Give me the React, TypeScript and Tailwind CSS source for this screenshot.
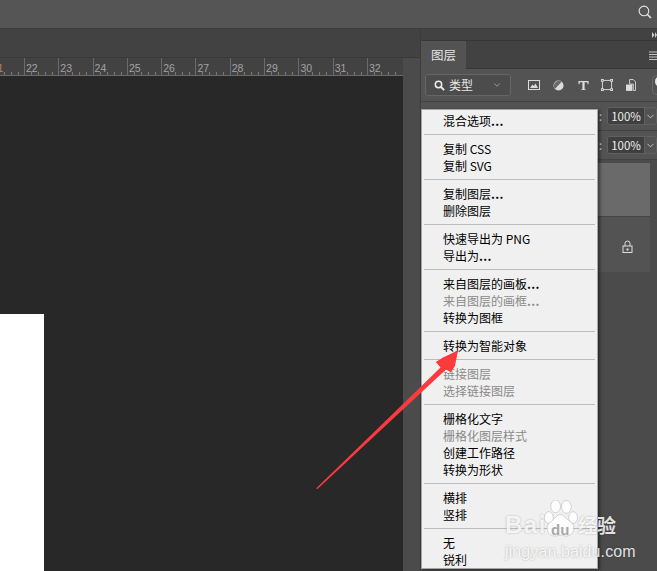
import React from "react";
import { ChevronDown } from "lucide-react";

const ticks = [21, 22, 23, 24, 25, 26, 27, 28, 29, 30, 31, 32];

// null marks a separator, dim items are the disabled ones
const menuItems: ({ label: string; dots?: boolean; dim?: boolean } | null)[] = [
  { label: "混合选项", dots: true },
  null,
  { label: "复制 CSS" },
  { label: "复制 SVG" },
  null,
  { label: "复制图层", dots: true },
  { label: "删除图层" },
  null,
  { label: "快速导出为 PNG" },
  { label: "导出为", dots: true },
  null,
  { label: "来自图层的画板", dots: true },
  { label: "来自图层的画框", dots: true, dim: true },
  { label: "转换为图框" },
  null,
  { label: "转换为智能对象" },
  null,
  { label: "链接图层", dim: true },
  { label: "选择链接图层", dim: true },
  null,
  { label: "栅格化文字" },
  { label: "栅格化图层样式", dim: true },
  { label: "创建工作路径" },
  { label: "转换为形状" },
  null,
  { label: "横排" },
  { label: "竖排" },
  null,
  { label: "无" },
  { label: "锐利" },
];

const Ruler = () => (
  <div className="h-[18px] w-[403px] overflow-hidden bg-[#424242] border-b border-[#6b6b6b] flex">
    <div className="flex h-full -ml-[10.3px] shrink-0">
      {ticks.map((n) => (
        <div key={n} className="relative h-full w-[34.3px] shrink-0 border-l border-[#6a6a6a]">
          <span className={`block pl-[1px] pt-[4px] text-[10.5px] leading-[12px] ${n === 21 ? "text-[#b9815a]" : "text-[#a3a3a3]"}`}>
            {n}
          </span>
          <svg className="absolute left-0 bottom-0" width="34" height="4">
            {[6.5, 13.5, 20.5, 27.5].map((x) => (
              <line key={x} x1={x} x2={x} y1="1" y2="4" stroke="#777" />
            ))}
          </svg>
        </div>
      ))}
    </div>
  </div>
);

const PercentBox = () => (
  <div className="flex items-center">
    <span className="mr-[5px] text-[12px] leading-none text-[#d8d8d8]">:</span>
    <div className="flex h-[18px] w-[50px] rounded-[3px] border border-[#606060] overflow-hidden">
      <div className="w-[38px] bg-[#3f3f3f] border-r border-[#606060] text-[11.5px] leading-[16px] text-center text-[#eeeeee]">
        100%
      </div>
      <div className="flex-1 flex items-center justify-center">
        <ChevronDown size={11} className="text-[#c8c8c8]" />
      </div>
    </div>
  </div>
);

const FilterIcons = () => (
  <div className="flex items-center">
    <svg className="ml-[17px]" width="12" height="10" viewBox="0 0 12 10">
      <rect x="0.500" y="0.500" width="11" height="9" fill="none" stroke="#dcdcdc" />
      <path d="M2 8 4.500 4.500 6 6l1.500-2.500L10 8z" fill="#dcdcdc" />
    </svg>
    <svg className="ml-[13px]" width="11" height="11" viewBox="0 0 12 12">
      <circle cx="6" cy="6" r="5.500" fill="#dcdcdc" />
      <path d="M9.500 2 2 9.800a5.500 5.500 0 0 1 7.500-7.800z" fill="#6a6a6a" />
    </svg>
    <svg className="ml-[14px]" width="11" height="11" viewBox="0 0 12 12">
      <path d="M0.500 1h11v3.500h-1L10 2.500H7.200v7.800h1.500V11H3.300v-.7h1.500V2.500H2L1.500 4.500h-1z" fill="#dcdcdc" />
    </svg>
    <svg className="ml-[12px]" width="12" height="12" viewBox="0 0 13 13">
      <rect x="1.500" y="1.500" width="10" height="10" fill="none" stroke="#dcdcdc" />
      <g fill="#535353" stroke="#dcdcdc">
        <rect x="0.500" y="0.500" width="2" height="2" />
        <rect x="10.500" y="0.500" width="2" height="2" />
        <rect x="0.500" y="10.500" width="2" height="2" />
        <rect x="10.500" y="10.500" width="2" height="2" />
      </g>
    </svg>
    <svg className="ml-[13px]" width="10" height="12" viewBox="0 0 11 13">
      <path d="M4 .5h4l2.500 2.500v9.500H8V5.500H4z" fill="none" stroke="#dcdcdc" />
      <rect x="0" y="6" width="7" height="7" fill="#dcdcdc" />
    </svg>
    <div className="ml-[16px] h-[20px] w-[5px] rounded-l-[6px] border-l border-y border-[#6a6a6a] overflow-hidden">
      <div className="h-[11px] w-[14px] ml-[2px] rounded-full bg-[#e6e6e6]" />
    </div>
  </div>
);

const LayersPanel = () => (
  <div className="flex-1 min-w-0 flex flex-col bg-[#4b4b4b] font-['Noto_Sans_CJK_SC',sans-serif]">
    <div className="h-[12px] bg-[#424242] border-b border-[#363636] flex items-center justify-end">
      <svg width="5" height="6" viewBox="0 0 5 6">
        <path d="M0 0l2.500 3L0 6zM3 0l2 3-2 3z" fill="#cfcfcf" />
      </svg>
    </div>
    <div className="h-[28px] bg-[#424242] border-b border-[#363636] flex items-stretch justify-between">
      <div className="w-[45px] -mb-px bg-[#535353] text-[12.5px] leading-[27px] text-center text-[#e6e6e6]">图层</div>
      <svg className="self-center mt-[1px]" width="8" height="9" viewBox="0 0 8 9">
        <path d="M0 1h8M0 3.500h8M0 6h8M0 8.500h8" stroke="#c4c4c4" />
      </svg>
    </div>
    <div className="h-[33px] bg-[#535353] border-b border-[#424242] flex items-center pl-[4px]">
      <div className="flex items-center h-[22px] w-[86px] rounded-[3px] border border-[#666666] bg-[#4c4c4c] px-[8px]">
        <svg width="11" height="11" viewBox="0 0 11 11" className="shrink-0">
          <circle cx="4.500" cy="4.500" r="3.200" fill="none" stroke="#eeeeee" strokeWidth="1.500" />
          <path d="M7 7l3.200 3.200" stroke="#eeeeee" strokeWidth="1.800" />
        </svg>
        <span className="ml-[4px] text-[12px] leading-none text-[#e8e8e8]">类型</span>
        <ChevronDown size={10} className="ml-auto text-[#a8a8a8]" />
      </div>
      <FilterIcons />
    </div>
    <div className="h-[29px] bg-[#535353] border-b border-[#424242] flex items-center justify-end">
      <PercentBox />
    </div>
    <div className="h-[29px] bg-[#535353] border-b border-[#424242] flex items-center justify-end">
      <PercentBox />
    </div>
    <div className="flex flex-col pr-[7px]">
      <div className="h-[54px] mt-[3px] bg-[#6a6a6a] border-b border-[#454545]" />
      <div className="h-[55px] bg-[#535353] flex items-center justify-end pr-[17px] pt-[3px]">
        <svg width="11" height="13" viewBox="0 0 11 13">
          <path d="M3 6V3.500a2.500 2.500 0 0 1 5 0V6" fill="none" stroke="#e0e0e0" />
          <rect x="1" y="6" width="9" height="6.500" fill="none" stroke="#e0e0e0" />
          <rect x="4.500" y="8.500" width="2" height="2" fill="#e0e0e0" />
        </svg>
      </div>
    </div>
  </div>
);

const ContextMenu = () => (
  <div className="absolute left-[421px] top-[109px] w-[177px] bg-[#f0f0f0] border border-[#a6a6a6] shadow-[2px_1px_3px_rgba(0,0,0,0.45)] pt-[2px] font-['Noto_Sans_CJK_SC',sans-serif]">
    {menuItems.map((item, i) =>
      item ? (
        <div
          key={i}
          className={`h-[17px] pl-[21px] text-[12px] leading-[17px] whitespace-nowrap ${item.dim ? "text-[#8a8a8a]" : "text-black"}`}
        >
          {item.label}
          {item.dots && <span className="font-bold tracking-[0.4px]">...</span>}
        </div>
      ) : (
        <div key={i} className="h-[11px] flex items-center px-[2px]">
          <div className="h-px w-full bg-[#bcbcbc]" />
        </div>
      )
    )}
  </div>
);

const Arrow = () => (
  <svg className="absolute left-0 top-0 pointer-events-none" width="657" height="571">
    <path d="M316 488.500 440.500 367.500 436 362 458 350.500 451 372 446 369.500 317.500 489z" fill="#fb3a3e" />
    <path d="M436 362 443 357.500 458 350.500 455 366 451 372z" fill="#fb3a3e" />
  </svg>
);

const Watermark = () => (
  <div className="absolute left-[505px] top-[500px] w-[120px] h-[62px] pointer-events-none text-white/85 [text-shadow:0_0_2px_rgba(0,0,0,0.3)] font-['Liberation_Sans',sans-serif]">
    <div className="flex items-end h-[37px]">
      <span className="w-[38px] text-[24px] leading-[24px] font-bold tracking-[1.5px]">Bai</span>
      <div className="relative w-[35px] h-[37px] shrink-0">
        <svg width="35" height="37" viewBox="0 0 36 38">
          <g fill="#ffffff" fillOpacity="0.85" stroke="#000000" strokeOpacity="0.15">
            <ellipse cx="6" cy="18" rx="4.500" ry="6" />
            <ellipse cx="13" cy="6.500" rx="5" ry="6.500" />
            <ellipse cx="24" cy="7" rx="5" ry="6.500" />
            <ellipse cx="31" cy="18" rx="4.500" ry="6" />
            <path d="M18 15c4 0 6 5 11 8 5 4 3 14-5 14-3 0-4-1-6-1s-3 1-6 1c-8 0-10-10-5-14 5-3 7-8 11-8z" />
          </g>
        </svg>
        <span className="absolute left-[8px] top-[23px] text-[15px] leading-[14px] font-bold text-[#a8a8a8] [text-shadow:none]">du</span>
      </div>
      <span className="w-[40px] text-[19px] leading-[24px] font-['Noto_Sans_CJK_SC',sans-serif] font-bold whitespace-nowrap">经验</span>
    </div>
    <div className="mt-[5px] text-[16px] leading-[20px] tracking-[0.1px] whitespace-nowrap">jingyan.baidu.com</div>
  </div>
);

export default function App() {
  return (
    <div className="relative w-[657px] h-[571px] overflow-hidden flex flex-col bg-[#535353] font-['Liberation_Sans',sans-serif]">
      <div className="h-[29px] shrink-0 bg-[#555555] border-b border-[#3c3c3c] flex items-center justify-end pr-[5px] pb-[5px]">
        <svg width="14" height="14" viewBox="0 0 16 16">
          <circle cx="6.800" cy="6.800" r="5.500" fill="none" stroke="#e4e4e4" strokeWidth="1.300" />
          <path d="M10.800 10.800l4 4" stroke="#e4e4e4" strokeWidth="1.800" />
        </svg>
      </div>
      <div className="flex flex-1 min-h-0">
        <div className="w-[421px] shrink-0 flex flex-col bg-[#4b4b4b] border-r border-[#3c3c3c]">
          <div className="h-[29px] bg-[#424242] border-b border-[#383838]" />
          <Ruler />
          <div className="flex-1 w-[403px] bg-[#282828] flex flex-col justify-end">
            <div className="w-[44px] h-[257px] bg-white" />
          </div>
        </div>
        <LayersPanel />
      </div>
      <ContextMenu />
      <Arrow />
      <Watermark />
    </div>
  );
}
